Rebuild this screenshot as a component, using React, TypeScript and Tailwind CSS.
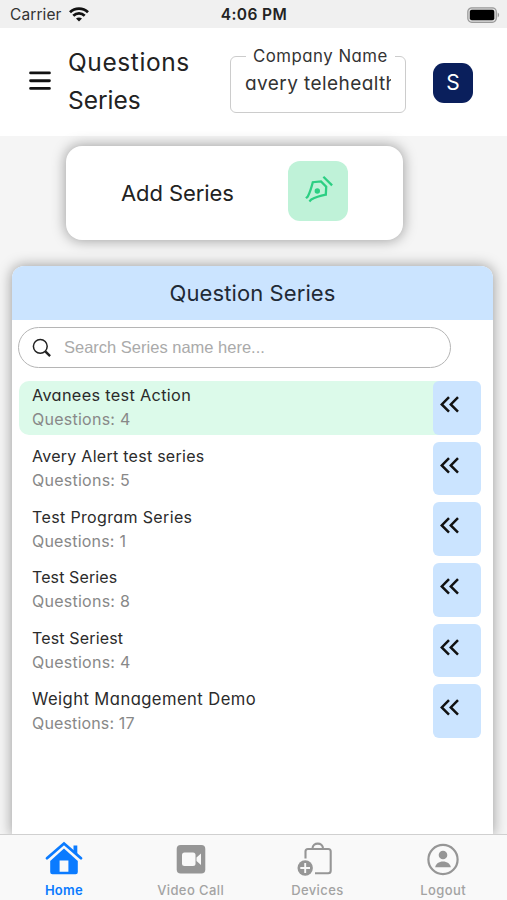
import React from "react";

type Series = { name: string; count: number; nameClass: string; countClass: string };

const seriesList: Series[] = [
  { name: "Avanees test Action", count: 4, nameClass: "text-[16.3px] tracking-[0.32px]", countClass: "tracking-[0.25px]" },
  { name: "Avery Alert test series", count: 5, nameClass: "tracking-[0.27px]", countClass: "tracking-[0.25px]" },
  { name: "Test Program Series", count: 1, nameClass: "tracking-[0.36px]", countClass: "tracking-[0.2px]" },
  { name: "Test Series", count: 8, nameClass: "tracking-[0.1px]", countClass: "tracking-[0.25px]" },
  { name: "Test Seriest", count: 4, nameClass: "tracking-[0.15px]", countClass: "tracking-[0.25px]" },
  { name: "Weight Management Demo", count: 17, nameClass: "text-[16.6px] tracking-[0.44px]", countClass: "tracking-[0.15px]" },
];

function StatusBar() {
  return (
    <div className="grid h-7 shrink-0 grid-cols-3 items-center bg-[#f0f0f0] pl-[10px] pr-[7px] pt-[2px] text-[#111]">
      <div className="flex items-center gap-[7px]">
        <span className="text-[15.5px] leading-5 tracking-[0.1px] text-[#333]">Carrier</span>
        <svg width="20" height="15" viewBox="0 0 20 15" className="-mt-[1px]" fill="none" stroke="#111" strokeWidth="2.8">
          <path d="M1 5.3C6 .5 14 .5 19 5.3" />
          <path d="M4.3 8.7c3.2-3 8.2-3 11.4 0" />
          <path d="M10 14.6 7 11.6c1.7-1.6 4.3-1.6 6 0Z" fill="#111" stroke="none" />
        </svg>
      </div>
      <span className="-ml-[2px] text-center text-[15.5px] font-semibold leading-5 tracking-[0.4px] text-[#222]">4:06 PM</span>
      <svg width="33" height="16" viewBox="0 0 33 16" className="-mt-[1px] justify-self-end">
        <rect x="0.8" y="0.8" width="28.5" height="14.5" rx="4" fill="#ddd" stroke="#999" strokeWidth="1.2" />
        <rect x="2.8" y="2.8" width="24.5" height="10.5" rx="2" fill="#000" />
        <path d="M30.7 5.6c1.9.7 1.9 4.1 0 4.8Z" fill="#999" />
      </svg>
    </div>
  );
}

function Header() {
  return (
    <header className="flex h-[108px] shrink-0 items-start bg-white pl-[29px] [font-feature-settings:'cv11']">
      <svg width="22" height="20" viewBox="0 0 22 20" className="mt-[43px]" stroke="#111" strokeWidth="2.9" strokeLinecap="round">
        <path d="M1.6 1.9h18.8M1.6 9.7h18.8M1.6 17.4h18.8" />
      </svg>
      <h1 className="ml-[17px] mt-[15px] w-[140px] text-[24.5px] leading-[38px] text-[#222]">
        <span className="tracking-[0.6px]">Questions</span> <span className="tracking-[0px]">Series</span>
      </h1>
      <fieldset className="ml-[22px] mt-[18px] h-[67px] w-[176px] min-w-0 rounded-[6px] border border-[#ccc] pl-[14px] pr-[9px]">
        <legend className="ml-[1px] whitespace-nowrap px-[7px] text-[16.8px] leading-5 tracking-[0.5px] text-[#333]">Company Name</legend>
        <div className="mt-[4px] w-[146px] overflow-hidden whitespace-nowrap text-[19px] leading-7 tracking-[0.42px] text-[#333]">
          avery telehealth
        </div>
      </fieldset>
      <div className="ml-[27px] mt-[35px] flex h-[40px] w-[40px] items-center justify-center rounded-[11px] bg-[#0a1f5c] text-[21px] text-white">
        S
      </div>
    </header>
  );
}

function AddCard() {
  return (
    <section className="ml-[66px] mt-[10px] flex h-[94px] w-[337px] shrink-0 items-center rounded-[16px] bg-white pl-[55px] shadow-[0_0_13px_1px_rgba(0,0,0,0.34)]">
      <span className="w-[167px] whitespace-nowrap text-[22px] leading-8 -tracking-[0.1px] text-[#222]">Add Series</span>
      <div className="-mt-[4px] flex h-[60px] w-[60px] items-center justify-center rounded-[12px] bg-[#bff2d8]">
        <svg width="34" height="34" viewBox="0 0 34 34" className="-mt-[4px]" fill="none" stroke="#2ccf83" strokeWidth="2.3">
          <path d="m5 26.3 1.8-1.8c2.4-4.6 3.5-8.5 5-14.3l8.2-.8 5.2 5.3-.4 8c-5.8 1.2-10.2 2.5-14.5 4.8L8.4 29.5" />
          <path d="m22.4 4.8 8.7 8.6" />
          <circle cx="16.3" cy="19" r="2.7" fill="#2ccf83" stroke="none" />
        </svg>
      </div>
    </section>
  );
}

function SeriesRow({ item, active }: { item: Series; active: boolean }) {
  return (
    <li className={`flex h-[53.6px] rounded-[10px] ${active ? "bg-[#dcfaea]" : "bg-white"}`}>
      <div className="w-[414.4px] whitespace-nowrap pl-[13px] pt-[2.3px] text-[16px] leading-6">
        <p className={`leading-6 text-[#2b2b2b] ${item.nameClass}`}>{item.name}</p>
        <p className={`text-[#888] ${item.countClass}`}>Questions: {item.count}</p>
      </div>
      <button className="flex w-12 items-start rounded-[6px] bg-[#cbe4ff] pl-[6.5px] pt-[15px]">
        <svg width="20" height="17" viewBox="0 0 20 17" fill="none" stroke="#111" strokeWidth="2.5">
          <path d="M9 1.2 1.8 8.4 9 15.6M18 1.2l-7.2 7.2 7.2 7.2" />
        </svg>
      </button>
    </li>
  );
}

function SeriesPanel() {
  return (
    <section className="ml-3 mt-[26px] min-h-0 w-[481px] flex-1 rounded-t-[12px] bg-white shadow-[0_0_13px_1px_rgba(0,0,0,0.34)] [font-feature-settings:'cv11']">
      <h2 className="flex h-[54px] items-center justify-center rounded-t-[12px] bg-[#cbe4ff] text-[22px] tracking-[0.1px] text-[#1f2a36]">
        Question Series
      </h2>
      <div className="ml-[6px] mt-[7px] flex h-[41px] w-[433px] items-center rounded-full border-[1.5px] border-[#b5b5b5] pl-[13px]">
        <svg width="20" height="20" viewBox="0 0 20 20" fill="none" stroke="#222">
          <circle cx="8.3" cy="8.3" r="6.9" strokeWidth="1.5" />
          <path d="m13.3 13.3 4.8 4.8" strokeWidth="2.4" />
        </svg>
        <span className="ml-[12px] font-['Liberation_Sans',sans-serif] text-[16.5px] text-[#aaa]">Search Series name here...</span>
      </div>
      <ul className="ml-[7px] mt-[13px] flex w-[462.4px] flex-col gap-[7.1px]">
        {seriesList.map((item, i) => (
          <SeriesRow key={item.name} item={item} active={i === 0} />
        ))}
      </ul>
    </section>
  );
}

function TabBar() {
  return (
    <nav className="relative grid h-[66px] shrink-0 grid-cols-4 border-t border-[#d0d0d0] bg-[#f9f9f9] text-[13px] font-medium leading-4 text-[#a3a3a3]">
      <div className="flex flex-col items-center pt-[6px] font-semibold text-[#0b7bff]">
        <svg width="38" height="36" viewBox="0 0 38 36" fill="currentColor" className="ml-[1px]">
          <path d="M19 7.500 5.200 20V31q0 2.200 2.200 2.200h23.200q2.200 0 2.200-2.200V20Z" />
          <path d="M14.600 19.500h8.800v11.300h-8.800Z" fill="#f9f9f9" />
          <path d="m1 19 18-15.500L37 19" fill="none" stroke="#f9f9f9" strokeWidth="4.500" />
          <path d="M2 17.200 19 2.500l17 14.700" fill="none" stroke="currentColor" strokeWidth="2.800" strokeLinecap="round" />
          <path d="M28.500 4.500h3.800v9l-3.800-3Z" />
        </svg>
        <span className="ml-[1px] mt-[5px] tracking-[0.2px]">Home</span>
      </div>
      <div className="flex flex-col items-center pt-[6px]">
        <svg width="38" height="36" viewBox="0 0 38 36" fill="#969696" className="ml-[1px]">
          <rect x="4.700" y="4" width="28.600" height="28.600" rx="4" />
          <rect x="10" y="11.600" width="13.500" height="13.400" rx="2.500" fill="#f9f9f9" />
          <path d="m24.500 16.500 4.500-4v11.600l-4.500-4Z" fill="#f9f9f9" />
        </svg>
        <span className="ml-[1px] mt-[5px] tracking-[0.4px]">Video Call</span>
      </div>
      <div className="flex flex-col items-center pt-[6px]">
        <svg width="46" height="36" viewBox="0 0 46 36" fill="none" stroke="#969696" strokeWidth="2.100" className="-ml-[2px]">
          <path d="M12.500 17.500V10.500q0-2.500 2.500-2.500h20.200q2.500 0 2.500 2.500v19.200q0 2.500-2.500 2.500H22" />
          <path d="M19.500 7.500c0-6.500 10.500-6.500 10.500 0" />
          <circle cx="12.200" cy="27" r="7.700" fill="#969696" stroke="none" />
          <path d="M7.300 27H17M12.200 22.100v9.800" stroke="#f9f9f9" strokeWidth="1.900" />
        </svg>
        <span className="ml-[1px] mt-[5px] tracking-[0.4px]">Devices</span>
      </div>
      <div className="flex flex-col items-center pt-[6px]">
        <svg width="38" height="36" viewBox="0 0 38 36" fill="#969696" className="-ml-[2px]">
          <circle cx="19" cy="18.500" r="14.600" fill="none" stroke="#969696" strokeWidth="2.200" />
          <circle cx="19" cy="14" r="4.300" />
          <path d="M11.200 26.200c.4-3.600 3.800-5.800 7.800-5.800s7.400 2.200 7.800 5.800Z" />
        </svg>
        <span className="-ml-[1px] mt-[5px] tracking-[0.4px]">Logout</span>
      </div>
    </nav>
  );
}

export default function App() {
  return (
    <main className="flex h-[900px] w-[507px] flex-col overflow-hidden bg-[#f5f5f5] font-[Inter,'Liberation_Sans',sans-serif]">
      <StatusBar />
      <Header />
      <AddCard />
      <SeriesPanel />
      <TabBar />
    </main>
  );
}
